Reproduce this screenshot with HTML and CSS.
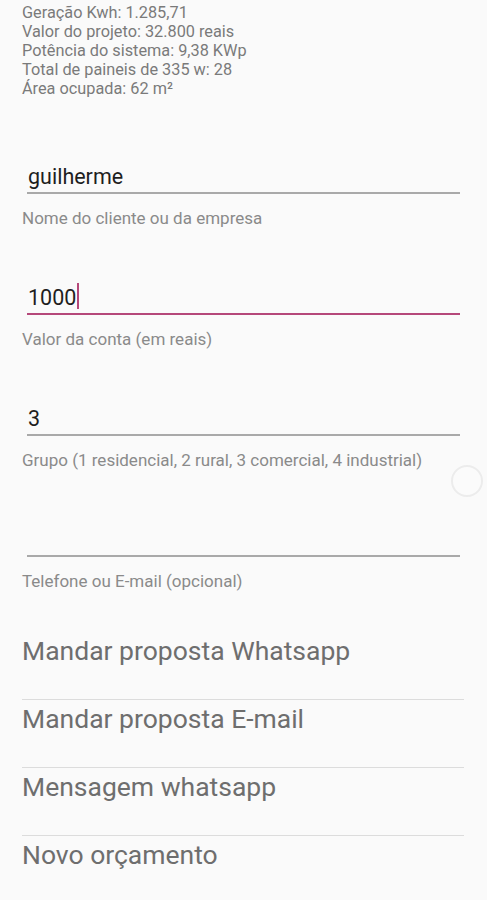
FILE: index.html
```html
<!DOCTYPE html>
<html lang="pt-BR">
<head>
    <meta charset="UTF-8">
    <meta name="viewport" content="width=device-width, initial-scale=1.0">
    <title>Orçamento</title>
    <link rel="stylesheet" href="styles.css">
</head>
<body>
    <div class="summary">
        <p>Geração Kwh: 1.285,71</p>
        <p>Valor do projeto: 32.800 reais</p>
        <p>Potência do sistema: 9,38 KWp</p>
        <p>Total de paineis de 335 w: 28</p>
        <p>Área ocupada: 62 m²</p>
    </div>

    <div class="form">
        <div class="field">
            <div class="input-wrap">
                <input type="text" id="cliente" value="guilherme">
            </div>
            <label for="cliente">Nome do cliente ou da empresa</label>
        </div>
        <div class="field">
            <div class="input-wrap">
                <input type="text" id="conta" value="1000" class="focused">
                <span class="caret"></span>
            </div>
            <label for="conta">Valor da conta (em reais)</label>
        </div>
        <div class="field">
            <div class="input-wrap">
                <input type="text" id="grupo" value="3">
            </div>
            <label for="grupo">Grupo (1 residencial, 2 rural, 3 comercial, 4 industrial)</label>
        </div>
        <div class="field">
            <div class="input-wrap">
                <input type="text" id="contato" value="">
            </div>
            <label for="contato">Telefone ou E-mail (opcional)</label>
        </div>
    </div>

    <div class="actions">
        <button>Mandar proposta Whatsapp</button>
        <button>Mandar proposta E-mail</button>
        <button>Mensagem whatsapp</button>
        <button>Novo orçamento</button>
    </div>

    <div class="scroll-dot"></div>
</body>
</html>
```

FILE: styles.css
```css
body {
    margin: 0;
    background: #fafafa;
    font-family: Roboto, "Noto Sans", sans-serif;
    position: relative;
    min-height: 900px;
}
.summary {
    padding: 3px 22px 0;
    color: #7a7a7a;
    font-size: 16.3px;
    line-height: 19px;
}
.summary p {
    margin: 0;
}
.form {
    padding: 66px 22px 0;
}
.field {
    margin-bottom: 57px;
}
.field:last-child {
    margin-bottom: 0;
}
.input-wrap {
    position: relative;
    width: 433px;
    margin-left: 5px;
}
.field input {
    display: block;
    box-sizing: border-box;
    width: 100%;
    height: 30px;
    margin: 0;
    padding: 0 0 4px 1px;
    border: none;
    border-bottom: 2px solid #a9a9a9;
    background: transparent;
    font-family: inherit;
    font-size: 21.5px;
    line-height: 24px;
    color: #1e1e1e;
    outline: none;
}
.field input.focused {
    border-bottom-color: #b5487a;
}
.caret {
    position: absolute;
    left: 50px;
    top: -2px;
    width: 2px;
    height: 26px;
    background: #b5487a;
}
.field label {
    display: block;
    margin-top: 14px;
    font-size: 17px;
    line-height: 20px;
    color: #8a8a8a;
}
.actions {
    padding: 45px 23px 0 22px;
}
.actions button {
    display: block;
    width: 100%;
    padding: 4px 0 33px;
    margin: 0;
    border: none;
    border-bottom: 1px solid #dcdcdc;
    background: transparent;
    text-align: left;
    font-family: inherit;
    font-size: 26.5px;
    line-height: 30px;
    color: #6e6e6e;
    cursor: pointer;
}
.actions button:first-child {
    padding-top: 0;
}
.actions button:last-child {
    border-bottom: none;
}
.scroll-dot {
    position: absolute;
    left: 451px;
    top: 465px;
    width: 28px;
    height: 28px;
    border-radius: 50%;
    border: 2px solid #ececec;
    background: #fbfbfb;
}
```
